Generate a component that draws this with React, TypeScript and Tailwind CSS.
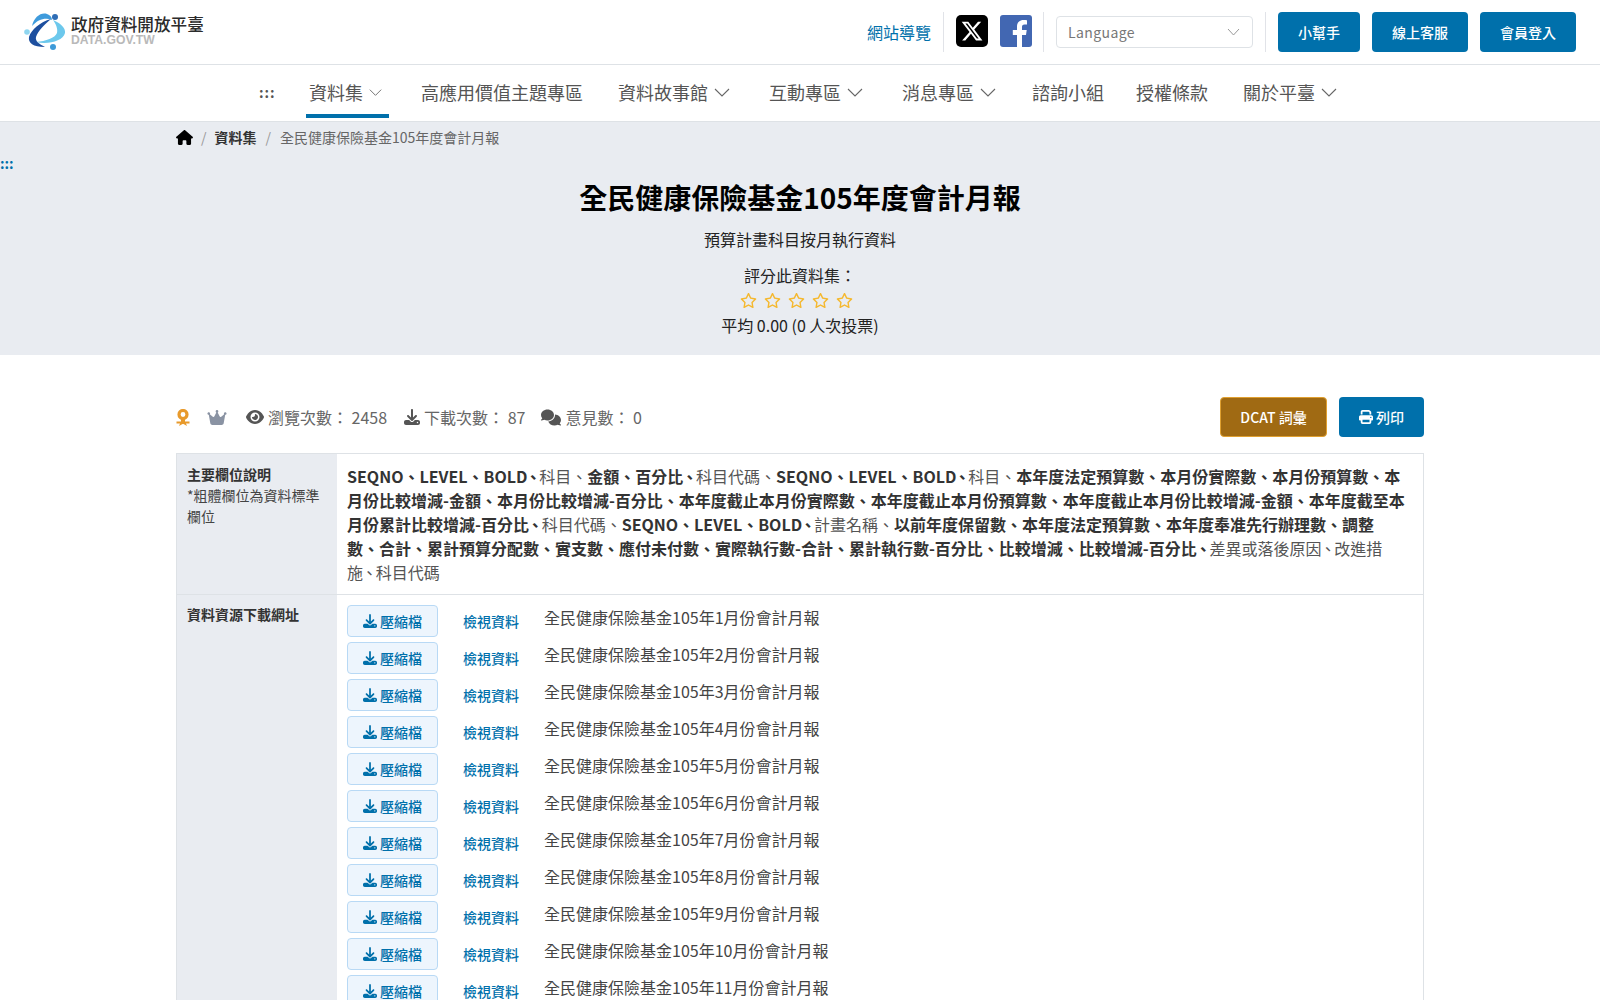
import { FaHouse, FaDownload, FaEye, FaComments, FaPrint, FaCrown, FaRegStar } from "react-icons/fa6";

const font = { fontFamily: '"Noto Sans CJK TC", "Noto Sans", sans-serif' };

function Logo() {
  return (
    <svg width="42" height="38" viewBox="0 0 42 38" className="shrink-0">
      <path d="M29 7 C36 10 42 15 41 20 C39 28 24 32 12 29 C22 28 31 25 33 20 C34 16 32 11 29 7Z" fill="#6cc8ec" />
      <path d="M8 13 C10 4 17 -1 23 1 C26 2 28 4 28 7 C22 4 14 6 8 13Z" fill="#3f9bdc" />
      <path d="M27 6 C16 9 7 17 5 24 C4 30 9 34 21 34 C15 31 11 28 12 24 C14 18 20 12 27 6Z" fill="#1d4f9f" />
      <circle cx="31" cy="4" r="3" fill="#2f6db5" />
      <circle cx="3" cy="19" r="2.800" fill="#8fd6f0" />
      <circle cx="29" cy="34" r="3" fill="#3d9ad8" />
    </svg>
  );
}

function NavItem({ label, chevron, active }: { label: string; chevron?: boolean; active?: boolean }) {
  return (
    <a className={`flex items-center whitespace-nowrap h-[52px] text-[18px] text-[#555] ${active ? "border-b-4 border-[#0070ab] px-[3px] pt-[4px]" : ""}`}>
      {label}
      {chevron && (
        <svg width="16" height="9" viewBox="0 0 16 9" className="ml-[6px] mr-[4px]" fill="none" stroke="#666" strokeWidth="1.100">
          <path d="M1 1 L8 8 L15 1" />
        </svg>
      )}
    </a>
  );
}

function Sep({ tight }: { tight?: boolean }) {
  return <span className={tight ? "mx-[-2.1px]" : "mx-[-1.65px]"}>、</span>;
}

const months = ["1", "2", "3", "4", "5", "6", "7", "8", "9", "10", "11", "12"];

export default function App() {
  return (
    <div style={font} className="h-[1000px] overflow-hidden bg-white text-[#333] text-[16px]">
      <header className="h-[65px] border-b border-[#dee2e6] flex items-center justify-between pl-6 pr-6">
        <div className="flex items-center gap-[5px]">
          <Logo />
          <div className="flex flex-col -mt-[3px]">
            <span className="text-[16.6px] leading-[19px] font-medium text-[#2b2b2b]">政府資料開放平臺</span>
            <span style={{ fontFamily: '"Liberation Sans", sans-serif' }} className="text-[12.2px] leading-[13px] font-bold text-[#b9b9b9]">DATA.GOV.TW</span>
          </div>
        </div>
        <div className="flex items-center">
          <a className="text-[#0070ab]">網站導覽</a>
          <div className="w-px h-10 bg-[#e1e3e8] ml-3 mr-3" />
          <svg width="32" height="32" viewBox="0 0 32 32" className="-mt-[2px]">
            <rect width="32" height="32" rx="5" fill="#000" />
            <g transform="translate(4.5 4.5) scale(0.96)">
              <path fill="#fff" d="M18.244 2.25h3.308l-7.227 8.26 8.502 11.24H16.17l-5.214-6.817L4.99 21.75H1.68l7.73-8.835L1.254 2.25H8.08l4.713 6.231zm-1.161 17.52h1.833L7.084 4.126H5.117z" />
            </g>
          </svg>
          <svg width="32" height="32" viewBox="0 0 32 32" className="ml-3 -mt-[2px]">
            <rect width="32" height="32" rx="3" fill="#4267b2" />
            <path fill="#fff" d="M22 32V20h4l.7-5H22v-3c0-1.5.6-2.4 2.5-2.4H27V5.2C26.5 5.1 25 5 23.500 5 19.800 5 17 7.200 17 11.500V15h-4.200v5H17v12z" />
          </svg>
          <div className="w-px h-10 bg-[#e1e3e8] ml-[11px] mr-3" />
          <div className="w-[197px] h-8 border border-[#dee2e6] rounded flex items-center justify-between pl-[11px] pr-[12px] text-[14px] text-[#777]">
            <span className="tracking-[0.4px]">Language</span>
            <svg width="13" height="8" viewBox="0 0 13 8" fill="none" stroke="#999" strokeWidth="1">
              <path d="M1 1 L6.500 7 L12 1" />
            </svg>
          </div>
          <div className="w-px h-10 bg-[#e1e3e8] ml-3 mr-3" />
          <div className="flex gap-3">
            <a className="w-[82px] h-10 rounded bg-[#0070ab] text-white text-[14px] font-medium flex items-center justify-center">小幫手</a>
            <a className="w-[96px] h-10 rounded bg-[#0070ab] text-white text-[14px] font-medium flex items-center justify-center">線上客服</a>
            <a className="w-[96px] h-10 rounded bg-[#0070ab] text-white text-[14px] font-medium flex items-center justify-center">會員登入</a>
          </div>
        </div>
      </header>

      <nav className="h-[56px] flex items-end pb-[3px] pl-[259px]">
        <span className="h-[52px] flex items-center text-[#555] text-[14px] tracking-[1px] font-bold w-[47px]">:::</span>
        <div className="flex items-center">
          <div className="w-[83px]"><NavItem label="資料集" chevron active /></div>
          <div className="ml-[32px]"><NavItem label="高應用價值主題專區" /></div>
          <div className="ml-[35px]"><NavItem label="資料故事館" chevron /></div>
          <div className="ml-[35px]"><NavItem label="互動專區" chevron /></div>
          <div className="ml-[35px]"><NavItem label="消息專區" chevron /></div>
          <div className="ml-[32px]"><NavItem label="諮詢小組" /></div>
          <div className="ml-[32px]"><NavItem label="授權條款" /></div>
          <div className="ml-[35px]"><NavItem label="關於平臺" chevron /></div>
        </div>
      </nav>

      <section className="h-[234px] bg-[#e9ecf1] border-t border-[#dee2e6] relative">
        <div className="w-[1248px] mx-auto h-[30px] flex items-center text-[14px]">
          <FaHouse className="w-[17px] h-[15px] text-black" />
          <span className="mx-[8px] text-[#999]">/</span>
          <span className="font-bold text-[#333]">資料集</span>
          <span className="mx-[9px] text-[#999]">/</span>
          <span className="text-[#666]">全民健康保險基金105年度會計月報</span>
        </div>
        <a className="absolute left-0 top-[31px] text-[14px] leading-[20px] font-bold text-[#0070ab]">:::</a>
        <h1 className="text-center text-[28px] leading-[42px] font-bold text-black mt-[24px]">全民健康保險基金105年度會計月報</h1>
        <p className="text-center leading-[24px] mt-[9px] text-[#222]">預算計畫科目按月執行資料</p>
        <p className="text-center leading-[24px] mt-[12px] text-[#222]">評分此資料集：</p>
        <div className="flex justify-center gap-[7px] h-[26px] items-center pr-[8px]">
          {[0, 1, 2, 3, 4].map((i) => (
            <FaRegStar key={i} className="w-[17px] h-[17px] text-[#f5b82e]" />
          ))}
        </div>
        <p className="text-center leading-[24px] text-[#222]">平均 0.00 (0 人次投票)</p>
      </section>

      <main className="w-[1248px] mx-auto">
        <div className="flex items-center justify-between mt-[42px] h-10 text-[#666]">
          <div className="flex items-center">
            <svg width="14" height="17" viewBox="0 0 14 17">
              <circle cx="7" cy="5.500" r="4" fill="none" stroke="#e89a2c" strokeWidth="3.200" />
              <path d="M5 10 L5 12.500 L0.500 12.500 L0.500 14.500 L4 14.500 L3 17 L6.500 15 L7.500 15 L11 17 L10 14.500 L13.500 14.500 L13.500 12.500 L9 12.500 L9 10 Z" fill="#e89a2c" />
            </svg>
            <FaCrown className="ml-[17px] w-[20px] h-[17px] text-[#8a93a3]" />
            <FaEye className="ml-[19px] w-[18px] h-[16px] text-[#555]" />
            <span className="ml-[4px]">瀏覽次數： 2458</span>
            <FaDownload className="ml-[17px] w-[16px] h-[16px] text-[#555]" />
            <span className="ml-[4px]">下載次數： 87</span>
            <FaComments className="ml-[16px] w-[20px] h-[17px] text-[#555]" />
            <span className="ml-[4px]">意見數： 0</span>
          </div>
          <div className="flex gap-3">
            <a className="w-[107px] h-10 rounded bg-[#a06a13] border border-[#e0a030] text-white text-[14px] font-medium flex items-center justify-center">DCAT 詞彙</a>
            <a className="w-[85px] h-10 rounded bg-[#0070ab] text-white text-[14px] font-medium flex items-center justify-center gap-[3px]">
              <FaPrint className="w-[14px] h-[14px]" />列印
            </a>
          </div>
        </div>

        <div className="mt-[16px] border border-[#dee2e6]">
          <div className="grid grid-cols-[160px_1fr] border-b border-[#dee2e6]">
            <div className="bg-[#e9ecf1] px-[10px] pt-[10px] text-[14px] leading-[21px] text-[#444]">
              <div className="font-bold text-[#333]">主要欄位說明</div>
              <div>*粗體欄位為資料標準欄位</div>
            </div>
            <div className="px-[10px] py-[10px] leading-[24px] text-[#555]">
              <b className="text-[#333]">SEQNO、LEVEL、BOLD<Sep tight /></b>科目、<b className="text-[#333]">金額、百分比<Sep /></b>科目代碼、<b className="text-[#333]">SEQNO、LEVEL、BOLD<Sep tight /></b>科目、<b className="text-[#333]">本年度法定預算數、本月份實際數、本月份預算數、本月份比較增減-金額、本月份比較增減-百分比、本年度截止本月份實際數、本年度截止本月份預算數、本年度截止本月份比較增減-金額、本年度截至本月份累計比較增減-百分比<Sep /></b>科目代碼、<b className="text-[#333]">SEQNO、LEVEL、BOLD<Sep tight /></b>計畫名稱、<b className="text-[#333]">以前年度保留數、本年度法定預算數、本年度奉准先行辦理數、調整<br />數、合計、累計預算分配數、實支數、應付未付數、實際執行數-合計、累計執行數-百分比、比較增減、比較增減-百分比<Sep /></b>差異或落後原因<Sep />改進措<br />施<Sep />科目代碼
            </div>
          </div>
          <div className="grid grid-cols-[160px_1fr]">
            <div className="bg-[#e9ecf1] px-[10px] pt-[9px] text-[14px] leading-[21px] font-bold text-[#333]">資料資源下載網址</div>
            <div className="px-[10px] pt-[10px] flex flex-col gap-[5px] pb-[10px]">
              {months.map((m) => (
                <div key={m} className="flex items-start h-8">
                  <a className="w-[91px] h-8 rounded border border-[#b8d9f5] bg-[#edf5fd] text-[#0070ab] text-[14px] font-medium flex items-center justify-center gap-[3px]">
                    <FaDownload className="w-[14px] h-[14px]" />壓縮檔
                  </a>
                  <a className="ml-[25px] mt-[5px] text-[14px] leading-[22px] font-medium text-[#0070ab]">檢視資料</a>
                  <span className="ml-[25px] leading-[24px] text-[#444]">全民健康保險基金105年{m}月份會計月報</span>
                </div>
              ))}
            </div>
          </div>
        </div>
      </main>
    </div>
  );
}
